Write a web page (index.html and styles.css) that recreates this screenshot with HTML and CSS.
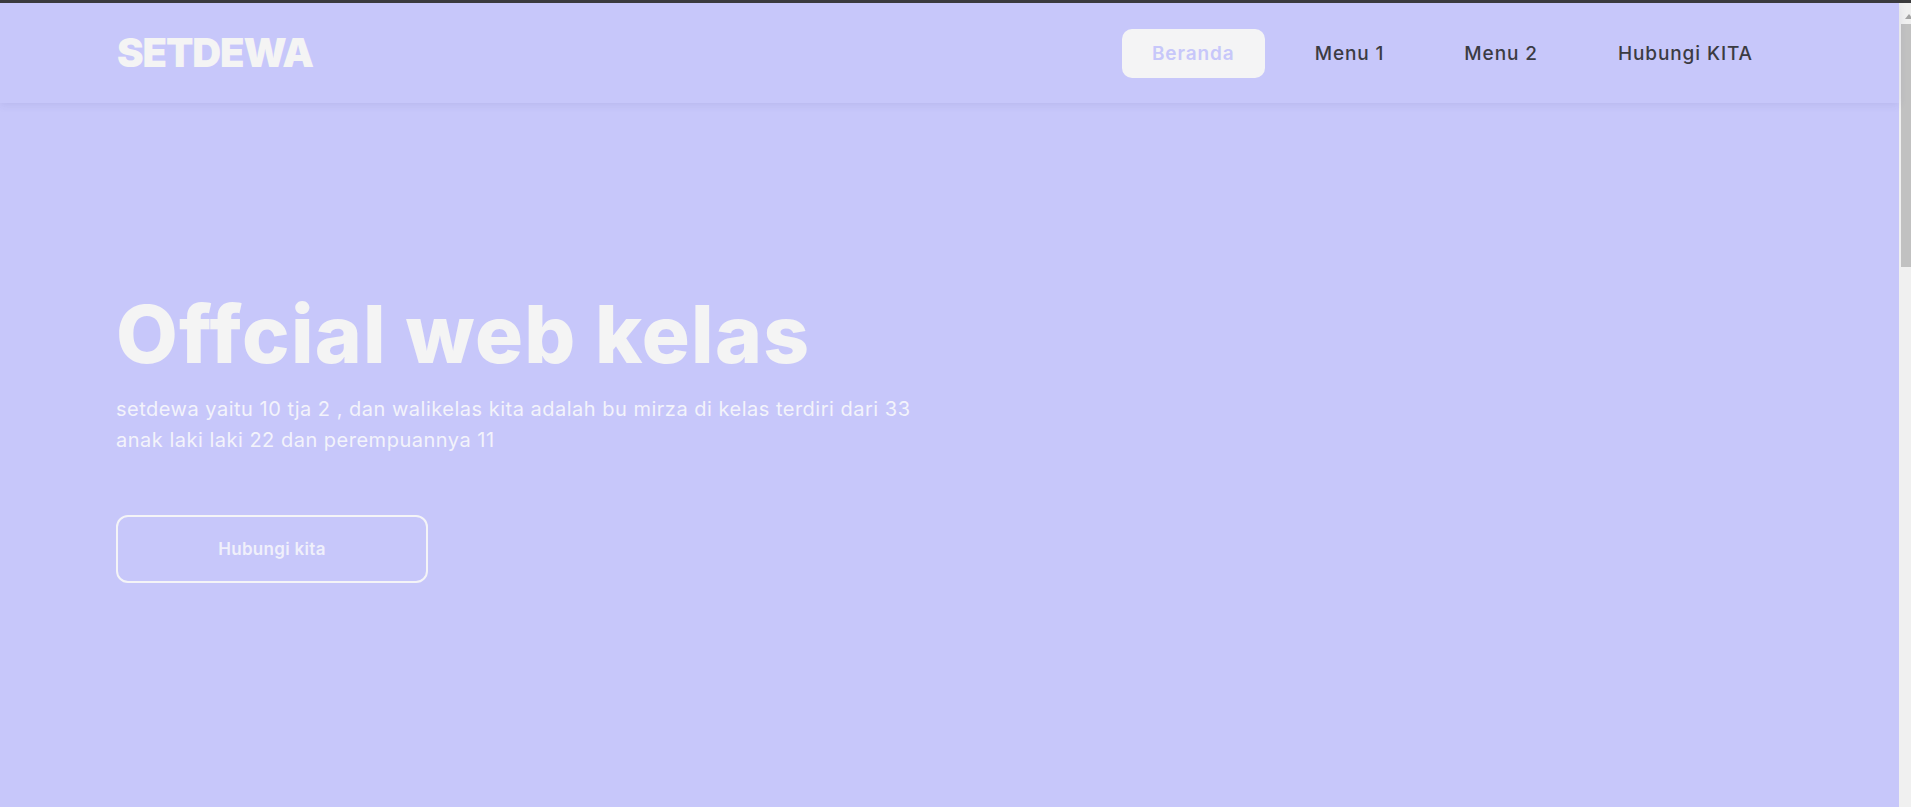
FILE: index.html
```html
<!DOCTYPE html>
<html lang="id">
<head>
<meta charset="utf-8">
<title>SETDEWA</title>
<link rel="stylesheet" href="styles.css">
</head>
<body>
<div class="window">
  <div class="page">
    <header class="navbar">
      <div class="logo">SETDEWA</div>
      <nav class="menu">
        <a class="menu-item active" href="#">Beranda</a>
        <a class="menu-item" href="#">Menu 1</a>
        <a class="menu-item" href="#">Menu 2</a>
        <a class="menu-item" href="#">Hubungi KITA</a>
      </nav>
    </header>
    <section class="hero">
      <h1 class="hero-title">Offcial web kelas</h1>
      <p class="hero-text">setdewa yaitu 10 tja 2 , dan walikelas kita adalah bu mirza di kelas terdiri dari 33 anak laki laki 22 dan perempuannya 11</p>
      <a class="hero-btn" href="#">Hubungi kita</a>
    </section>
  </div>
  <div class="scrollbar">
    <div class="scroll-arrow"></div>
    <div class="scroll-thumb"></div>
  </div>
</div>
</body>
</html>
```
FILE: styles.css
```css
* { box-sizing: border-box; }
html, body { margin: 0; padding: 0; height: 100%; overflow: hidden; }
body {
  background: #3b3b3d;
  padding-top: 3px;
  font-family: "Inter", "Noto Sans", sans-serif;
}
.window {
  display: flex;
  height: 804px;
}
.page {
  flex: 1;
  background: #c7c7fa;
  display: flex;
  flex-direction: column;
}
.navbar {
  height: 100px;
  flex: none;
  display: flex;
  align-items: center;
  justify-content: space-between;
  padding: 0 116px 0 117px;
  background: #c7c7fa;
  box-shadow: 0 2px 8px rgba(60, 60, 140, 0.10);
  position: relative;
  z-index: 1;
}
.logo {
  color: #f4f4f4;
  font-weight: 900;
  font-size: 40px;
  letter-spacing: -1.1px;
  line-height: 1;
}
.menu {
  display: flex;
  gap: 20px;
  align-items: center;
}
.menu-item {
  display: flex;
  align-items: center;
  height: 49px;
  padding: 0 30px;
  border-radius: 10px;
  color: #3b3b42;
  text-decoration: none;
  font-size: 19px;
  letter-spacing: 0.9px;
  font-weight: 500;
}
.menu-item.active {
  background: #f4f4f5;
  color: #c7c7fa;
  font-weight: 600;
}
.hero {
  padding: 191px 116px 0 116px;
}
.hero-title {
  margin: 0;
  color: #f4f4f4;
  font-size: 80px;
  line-height: 80px;
  font-weight: 800;
  letter-spacing: 1.2px;
}
.hero-text {
  margin: 20px 0 0 0;
  width: 830px;
  color: #f3f3fb;
  font-size: 20px;
  letter-spacing: 0.5px;
  line-height: 31px;
}
.hero-btn {
  margin-top: 59px;
  width: 312px;
  height: 68px;
  display: flex;
  align-items: center;
  justify-content: center;
  border: 2px solid #f4f4f7;
  border-radius: 12px;
  color: #f0f0fb;
  font-weight: 600;
  font-size: 17px;
  letter-spacing: 0.3px;
  text-decoration: none;
}
.scrollbar {
  width: 12px;
  flex: none;
  background: #f0f0f0;
  display: flex;
  flex-direction: column;
  align-items: flex-end;
}
.scroll-arrow {
  margin-top: 11px;
  width: 0;
  height: 0;
  border-left: 4px solid transparent;
  border-right: 4px solid transparent;
  border-bottom: 5px solid #a3a3a3;
  transform: translateX(2px);
}
.scroll-thumb {
  margin-top: 5px;
  width: 10px;
  height: 243px;
  background: #c1c1c1;
}
```
